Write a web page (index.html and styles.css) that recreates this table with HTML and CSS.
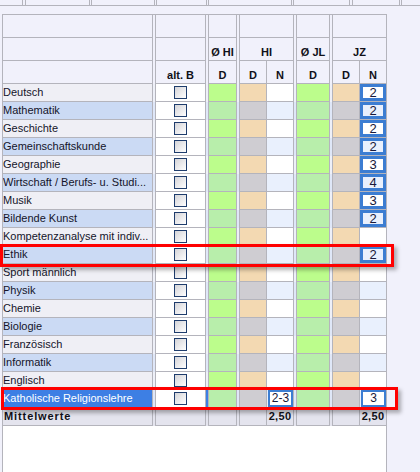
FILE: index.html
```html
<!DOCTYPE html>
<html>
<head>
<meta charset="utf-8">
<link rel="stylesheet" href="styles.css">
</head>
<body>
<div class="topstrip">
  <span class="ts tsa"></span><span class="ts tsb"></span><span class="ts tsc"></span><span class="ts tsd"></span><span class="ts tse"></span><span class="ts tsf"></span><span class="ts tsg"></span><span class="ts tsh"></span>
</div>
<div class="table">
  <div class="row hdr">
    <div class="c"></div><div class="sp"></div><div class="c"></div><div class="sp"></div><div class="c"></div><div class="sp"></div><div class="c s2"></div><div class="sp"></div><div class="c"></div><div class="sp"></div><div class="c s2"></div>
  </div>
  <div class="row hdr">
    <div class="c"></div><div class="sp"></div><div class="c"></div><div class="sp"></div><div class="c">Ø HI</div><div class="sp"></div><div class="c s2">HI</div><div class="sp"></div><div class="c">Ø JL</div><div class="sp"></div><div class="c s2">JZ</div>
  </div>
  <div class="row hdr">
    <div class="c"></div><div class="sp"></div><div class="c">alt. B</div><div class="sp"></div><div class="c">D</div><div class="sp"></div><div class="c">D</div><div class="c">N</div><div class="sp"></div><div class="c">D</div><div class="sp"></div><div class="c">D</div><div class="c">N</div>
  </div>

  <div class="row odd"><div class="c name">Deutsch</div><div class="sp"></div><div class="c ab"><span class="cb"></span></div><div class="sp sp2"></div><div class="c g"></div><div class="sp"></div><div class="c d"></div><div class="c n"></div><div class="sp"></div><div class="c g"></div><div class="sp"></div><div class="c d"></div><div class="c n"><span class="box">2</span></div></div>
  <div class="row even"><div class="c name">Mathematik</div><div class="sp"></div><div class="c ab"><span class="cb"></span></div><div class="sp sp2"></div><div class="c g"></div><div class="sp"></div><div class="c d"></div><div class="c n"></div><div class="sp"></div><div class="c g"></div><div class="sp"></div><div class="c d"></div><div class="c n"><span class="box">2</span></div></div>
  <div class="row odd"><div class="c name">Geschichte</div><div class="sp"></div><div class="c ab"><span class="cb"></span></div><div class="sp sp2"></div><div class="c g"></div><div class="sp"></div><div class="c d"></div><div class="c n"></div><div class="sp"></div><div class="c g"></div><div class="sp"></div><div class="c d"></div><div class="c n"><span class="box">2</span></div></div>
  <div class="row even"><div class="c name">Gemeinschaftskunde</div><div class="sp"></div><div class="c ab"><span class="cb"></span></div><div class="sp sp2"></div><div class="c g"></div><div class="sp"></div><div class="c d"></div><div class="c n"></div><div class="sp"></div><div class="c g"></div><div class="sp"></div><div class="c d"></div><div class="c n"><span class="box">2</span></div></div>
  <div class="row odd"><div class="c name">Geographie</div><div class="sp"></div><div class="c ab"><span class="cb"></span></div><div class="sp sp2"></div><div class="c g"></div><div class="sp"></div><div class="c d"></div><div class="c n"></div><div class="sp"></div><div class="c g"></div><div class="sp"></div><div class="c d"></div><div class="c n"><span class="box">3</span></div></div>
  <div class="row even"><div class="c name">Wirtschaft / Berufs- u. Studi...</div><div class="sp"></div><div class="c ab"><span class="cb"></span></div><div class="sp sp2"></div><div class="c g"></div><div class="sp"></div><div class="c d"></div><div class="c n"></div><div class="sp"></div><div class="c g"></div><div class="sp"></div><div class="c d"></div><div class="c n"><span class="box">4</span></div></div>
  <div class="row odd"><div class="c name">Musik</div><div class="sp"></div><div class="c ab"><span class="cb"></span></div><div class="sp sp2"></div><div class="c g"></div><div class="sp"></div><div class="c d"></div><div class="c n"></div><div class="sp"></div><div class="c g"></div><div class="sp"></div><div class="c d"></div><div class="c n"><span class="box">3</span></div></div>
  <div class="row even"><div class="c name">Bildende Kunst</div><div class="sp"></div><div class="c ab"><span class="cb"></span></div><div class="sp sp2"></div><div class="c g"></div><div class="sp"></div><div class="c d"></div><div class="c n"></div><div class="sp"></div><div class="c g"></div><div class="sp"></div><div class="c d"></div><div class="c n"><span class="box">2</span></div></div>
  <div class="row odd"><div class="c name">Kompetenzanalyse mit indiv...</div><div class="sp"></div><div class="c ab"><span class="cb"></span></div><div class="sp sp2"></div><div class="c g"></div><div class="sp"></div><div class="c d"></div><div class="c n"></div><div class="sp"></div><div class="c g"></div><div class="sp"></div><div class="c d"></div><div class="c n"></div></div>
  <div class="row even"><div class="c name">Ethik</div><div class="sp"></div><div class="c ab"><span class="cb"></span></div><div class="sp sp2"></div><div class="c g"></div><div class="sp"></div><div class="c d"></div><div class="c n"></div><div class="sp"></div><div class="c g"></div><div class="sp"></div><div class="c d"></div><div class="c n"><span class="box">2</span></div></div>
  <div class="row odd"><div class="c name">Sport männlich</div><div class="sp"></div><div class="c ab"><span class="cb"></span></div><div class="sp sp2"></div><div class="c g"></div><div class="sp"></div><div class="c d"></div><div class="c n"></div><div class="sp"></div><div class="c g"></div><div class="sp"></div><div class="c d"></div><div class="c n"></div></div>
  <div class="row even"><div class="c name">Physik</div><div class="sp"></div><div class="c ab"><span class="cb"></span></div><div class="sp sp2"></div><div class="c g"></div><div class="sp"></div><div class="c d"></div><div class="c n"></div><div class="sp"></div><div class="c g"></div><div class="sp"></div><div class="c d"></div><div class="c n"></div></div>
  <div class="row odd"><div class="c name">Chemie</div><div class="sp"></div><div class="c ab"><span class="cb"></span></div><div class="sp sp2"></div><div class="c g"></div><div class="sp"></div><div class="c d"></div><div class="c n"></div><div class="sp"></div><div class="c g"></div><div class="sp"></div><div class="c d"></div><div class="c n"></div></div>
  <div class="row even"><div class="c name">Biologie</div><div class="sp"></div><div class="c ab"><span class="cb"></span></div><div class="sp sp2"></div><div class="c g"></div><div class="sp"></div><div class="c d"></div><div class="c n"></div><div class="sp"></div><div class="c g"></div><div class="sp"></div><div class="c d"></div><div class="c n"></div></div>
  <div class="row odd"><div class="c name">Französisch</div><div class="sp"></div><div class="c ab"><span class="cb"></span></div><div class="sp sp2"></div><div class="c g"></div><div class="sp"></div><div class="c d"></div><div class="c n"></div><div class="sp"></div><div class="c g"></div><div class="sp"></div><div class="c d"></div><div class="c n"></div></div>
  <div class="row even"><div class="c name">Informatik</div><div class="sp"></div><div class="c ab"><span class="cb"></span></div><div class="sp sp2"></div><div class="c g"></div><div class="sp"></div><div class="c d"></div><div class="c n"></div><div class="sp"></div><div class="c g"></div><div class="sp"></div><div class="c d"></div><div class="c n"></div></div>
  <div class="row odd"><div class="c name">Englisch</div><div class="sp"></div><div class="c ab"><span class="cb"></span></div><div class="sp sp2"></div><div class="c g"></div><div class="sp"></div><div class="c d"></div><div class="c n"></div><div class="sp"></div><div class="c g"></div><div class="sp"></div><div class="c d"></div><div class="c n"></div></div>
  <div class="row even sel"><div class="c name">Katholische Religionslehre</div><div class="sp"></div><div class="c ab"><span class="cb"></span></div><div class="sp sp2"></div><div class="c g"></div><div class="sp"></div><div class="c d"></div><div class="c n"><span class="box thin">2-3</span></div><div class="sp"></div><div class="c g"></div><div class="sp"></div><div class="c d"></div><div class="c n"><span class="box thin">3</span></div></div>

  <div class="row mw"><div class="c name">Mittelwerte</div><div class="sp"></div><div class="c"></div><div class="sp"></div><div class="c"></div><div class="sp"></div><div class="c"></div><div class="c num">2,50</div><div class="sp"></div><div class="c"></div><div class="sp"></div><div class="c"></div><div class="c num">2,50</div></div>
  <div class="blank"></div>
</div>

<div class="mark m1"></div>
<div class="mark m2"></div>
</body>
</html>
```

FILE: styles.css
```css
* {
  box-sizing: border-box;
  margin: 0;
  padding: 0;
}

html, body {
  background: #f1f1fb;
}

body {
  width: 420px;
  height: 472px;
  overflow: hidden;
  position: relative;
  font-family: "Liberation Sans", Arial, sans-serif;
  font-size: 11px;
  color: #14142a;
}

/* cut-off strip at the very top */
.topstrip {
  display: flex;
  height: 6px;
  border-bottom: 1px solid #b4b4bc;
}
.ts {
  height: 5px;
  border-left: 1px solid #b4b4bc;
  border-right: 1px solid #b4b4bc;
}
.tsa { width: 23px; border-left: none; }
.tsb { width: 65px; margin-left: 2px; }
.tsc { width: 64px; margin-left: 1px; }
.tsd { width: 51px; margin-left: 1px; }
.tse { width: 84px; margin-left: 1px; }
.tsf { width: 57px; margin-left: 1px; }
.tsg { width: 48px; margin-left: 2px; }
.tsh { flex: 1; margin-left: 1px; border-right: none; }

/* grid table */
.table {
  margin: 8px 0 0 2px;
  width: 385px;
  border-left: 1px solid #b4b4bc;
  border-top: 1px solid #b4b4bc;
}

.row {
  display: grid;
  grid-template-columns: 150px 3px 50px 3px 28px 3px 27px 27px 3px 33px 3px 27px 27px;
  height: 18px;
}
.row.hdr {
  height: 23px;
}

.c {
  border-right: 1px solid #b4b4bc;
  border-bottom: 1px solid #b4b4bc;
  overflow: hidden;
  white-space: nowrap;
  line-height: 17px;
}
.sp {
  border-right: 1px solid #b4b4bc;
}
.s2 {
  grid-column: span 2;
}

.hdr .c {
  font-weight: bold;
  text-align: center;
  line-height: 16px;
  padding-top: 6px;
  color: #101018;
}

/* row colours */
.odd .name { background: #efeff5; }
.even .name { background: #cbdaf4; }
.odd .sp { background: #eef0f8; }
.even .sp { background: #dfe7f8; }
.ab { background: #ffffff; display: flex; align-items: center; justify-content: center; }
.odd .g { background: #bcfd8c; }
.even .g { background: #b8eeab; }
.odd .d { background: #f3d9b2; }
.even .d { background: #cfcdd2; }
.odd .n { background: #ffffff; }
.even .n { background: #e9f0fd; }

.name {
  text-overflow: clip;
}

.cb {
  display: block;
  width: 13px;
  height: 13px;
  border: 1px solid #1e3c6c;
  background: linear-gradient(to bottom right, #d4d4d8, #ffffff);
}

.box {
  display: block;
  height: 17px;
  border: 3px solid #3c7dd2;
  text-align: center;
  font-size: 13px;
  line-height: 11px;
  color: #18183a;
}
.box.thin {
  border-width: 2px;
  width: 25px;
  margin-left: 1px;
  font-size: 12px;
  line-height: 13px;
  background: #ffffff;
}

/* selected row */
.sel .name {
  background: #3d7fe4;
  color: #ffffff;
}
.sel .sp2 {
  background: #3d7fe4;
}

/* average row */
.mw .c, .mw .sp {
  background: #e4e4ee;
}
.mw .c {
  font-weight: bold;
  color: #101018;
}
.mw .name {
  letter-spacing: 0.9px;
  padding-left: 1px;
}
.mw .num {
  text-align: center;
  letter-spacing: 0.3px;
}

.blank {
  height: 46px;
  background: #ffffff;
  border-right: 1px solid #b4b4bc;
}

/* red annotation frames */
.mark {
  position: absolute;
  border: 3px solid #ff0000;
  box-shadow: 3px 3px 4px rgba(0, 0, 0, 0.3);
}
.m1 {
  left: 0;
  top: 244px;
  width: 394px;
  height: 23px;
}
.m2 {
  left: 1px;
  top: 387px;
  width: 397px;
  height: 23px;
}
```
